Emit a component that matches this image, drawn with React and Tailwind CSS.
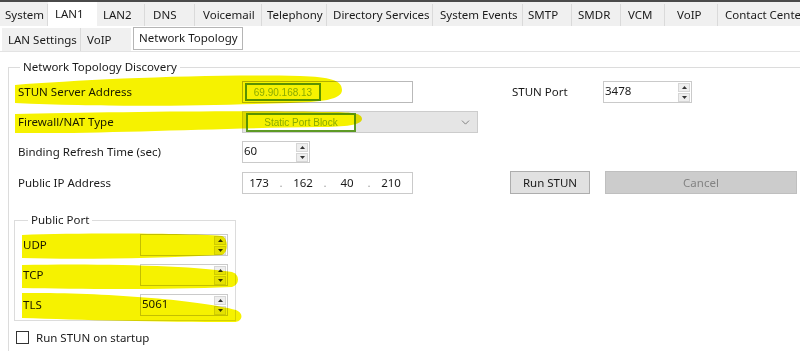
import React from 'react';
import { ChevronDown } from 'lucide-react';

const topTabs = [
  { label: 'System', w: 'w-[46px]', pl: 'pl-[3px]' },
  { label: 'LAN1', w: 'w-[49px]', pl: 'pl-[7px]', active: true },
  { label: 'LAN2', w: 'w-[48px]', pl: 'pl-[6px]' },
  { label: 'DNS', w: 'w-[50px]', pl: 'pl-[8px]' },
  { label: 'Voicemail', w: 'w-[67px]', pl: 'pl-[8px]' },
  { label: 'Telephony', w: 'w-[65px]', pl: 'pl-[5px]' },
  { label: 'Directory Services', w: 'w-[106px]', pl: 'pl-[6px]' },
  { label: 'System Events', w: 'w-[90px]', pl: 'pl-[7px]' },
  { label: 'SMTP', w: 'w-[49px]', pl: 'pl-[5px]' },
  { label: 'SMDR', w: 'w-[49px]', pl: 'pl-[6px]' },
  { label: 'VCM', w: 'w-[44px]', pl: 'pl-[7px]' },
  { label: 'VoIP', w: 'w-[53px]', pl: 'pl-[12px]' },
  { label: 'Contact Center', w: 'w-[100px]', pl: 'pl-[7px]' },
];

const Arrow = ({ up }) => (
  <div className="flex h-[9px] w-[12px] items-center justify-center border border-[#d6d6d6] bg-[#eeeeee]">
    <svg width="5" height="3" viewBox="0 0 5 3">
      {up ? <path d="M0 3 L2.5 0 L5 3 Z" fill="#333" /> : <path d="M0 0 L2.5 3 L5 0 Z" fill="#333" />}
    </svg>
  </div>
);

const Spin = ({ width, value }) => (
  <div className={`flex h-[22px] items-center border border-[#cacaca] bg-white ${width}`}>
    <span className="flex-1 self-start pt-[1px] pl-[1px] leading-[16px]">{value}</span>
    <div className="mr-[1px] flex flex-col gap-[1px]">
      <Arrow up />
      <Arrow />
    </div>
  </div>
);

const Row = ({ label, children }) => (
  <div className="flex h-[22px] items-center">
    <div className="w-[224px] shrink-0">{label}</div>
    {children}
  </div>
);

const PortRow = ({ label, value }) => (
  <div className="flex h-[22px] items-center">
    <div className="w-[117px] shrink-0">{label}</div>
    <Spin width="w-[88px]" value={value} />
  </div>
);

export default function App() {
  return (
    <div className="relative h-[351px] w-[800px] overflow-hidden bg-white font-['Noto_Sans',sans-serif] text-[11.5px] text-[#1a1a1a]">
      {/* top tab strip */}
      <div className="flex h-[26px] items-end border-t-2 border-[#4a4a4a] bg-[#f0f0f0] pl-[2px]">
        {topTabs.map((t) =>
          t.active ? (
            <div key={t.label} className={`flex h-[24px] shrink-0 items-start whitespace-nowrap bg-white pt-[3px] ${t.w} ${t.pl}`}>
              {t.label}
            </div>
          ) : (
            <div key={t.label} className={`flex h-[22px] shrink-0 items-center overflow-hidden whitespace-nowrap border-r border-[#dadada] bg-[#f0f0f0] ${t.w} ${t.pl}`}>
              {t.label}
            </div>
          )
        )}
      </div>

      {/* sub tab strip */}
      <div className="flex h-[26px] items-end border-b border-[#e3e3e3] pl-[2px]">
        <div className="flex h-[23px] w-[79px] items-center border-r border-[#dadada] bg-[#f0f0f0] pl-[6px]">LAN Settings</div>
        <div className="flex h-[23px] w-[50px] items-center bg-[#f0f0f0] pl-[6px]">VoIP</div>
        <div className="mb-[1px] ml-[2px] flex h-[23px] w-[110px] items-start border border-[#b5b5b5] bg-white pl-[5px] pt-[1px]">Network Topology</div>
      </div>

      {/* main group box */}
      <fieldset className="ml-[8px] mt-[7px] h-[320px] border-l border-t border-[#dcdcdc] pl-[5px]">
        <legend className="ml-[6px] px-[3px] leading-[16px]">Network Topology Discovery</legend>

        <div className="flex flex-col gap-[8px] pl-[4px] pt-[6px]">
          <Row label="STUN Server Address">
            <div className="flex h-[22px] w-[171px] items-center border border-[#b9b9b9] bg-white pl-[2px]">
              <div className="flex h-[18px] w-[76px] items-center justify-center border-2 border-[#5d9a25] font-['Liberation_Sans',Arial,sans-serif] text-[10px] text-[#8fb52c]">
                69.90.168.13
              </div>
            </div>
            <div className="ml-[99px] w-[91px]">STUN Port</div>
            <Spin width="w-[89px]" value="3478" />
          </Row>

          <Row label="Firewall/NAT Type">
            <div className="flex h-[22px] w-[236px] items-center border border-[#cccccc] bg-[#e5e5e5] pl-[3px] pr-[5px]">
              <div className="flex h-[19px] w-[110px] items-center justify-center border-2 border-[#5d9a25] bg-white font-['Liberation_Sans',Arial,sans-serif] text-[10px] text-[#8fb52c]">
                Static Port Block
              </div>
              <div className="flex-1" />
              <ChevronDown size={13} strokeWidth={1.5} className="text-[#6b6b6b]" />
            </div>
          </Row>

          <Row label="Binding Refresh Time (sec)">
            <Spin width="w-[68px]" value="60" />
          </Row>

          <div className="flex h-[23px] items-center">
            <div className="w-[224px] shrink-0">Public IP Address</div>
            <div className="flex h-[22px] w-[171px] items-center border border-[#cacaca] bg-white">
              <span className="w-[32px] text-center">173</span>
              <span className="w-[12px] text-center text-[#a0a0a0]">.</span>
              <span className="w-[32px] text-center">162</span>
              <span className="w-[12px] text-center text-[#a0a0a0]">.</span>
              <span className="w-[32px] text-center">40</span>
              <span className="w-[12px] text-center text-[#a0a0a0]">.</span>
              <span className="w-[32px] text-center">210</span>
            </div>
            <button className="ml-[97px] h-[23px] w-[80px] border border-[#adadad] bg-[#e1e1e1]">Run STUN</button>
            <button className="ml-[15px] h-[23px] w-[192px] border border-[#bfbfbf] bg-[#cccccc] text-[#838383]">Cancel</button>
          </div>
        </div>

        {/* public port group */}
        <fieldset className="mt-[18px] h-[109px] w-[222px] border border-[#dcdcdc] pl-[8px]">
          <legend className="ml-[5px] px-[3px] leading-[16px]">Public Port</legend>
          <div className="flex flex-col gap-[8px] pt-[6px]">
            <PortRow label="UDP" value="" />
            <PortRow label="TCP" value="" />
            <PortRow label="TLS" value="5061" />
          </div>
        </fieldset>

        <div className="mt-[8px] flex items-center gap-[7px] pl-[2px]">
          <div className="h-[13px] w-[13px] border border-[#333333] bg-white" />
          <span>Run STUN on startup</span>
        </div>
      </fieldset>

      {/* highlighter marks drawn over the screenshot */}
      <svg className="pointer-events-none absolute left-0 top-0 mix-blend-multiply" width="800" height="351" viewBox="0 0 800 351">
        <g fill="#f6f200">
          <path d="M15,85 C80,80 200,74 300,76 C330,77 342,80 342,90 C342,100 320,102 290,103 C220,105 120,108 15,103 Z" />
          <path d="M15,114 C100,112 250,110 330,112 C355,112 362,114 362,119 C362,125 345,127 320,127 C220,128 100,134 15,133 Z" />
          <path d="M22,235 C80,233 180,233 222,236 C228,238 229,252 222,255 C160,258 80,260 22,258 Z" />
          <path d="M22,265 C100,263 200,266 232,272 C240,274 240,285 232,287 C160,290 80,289 22,288 Z" />
          <path d="M22,293 C100,292 200,300 236,310 C244,313 243,322 234,322 C160,322 80,320 22,318 Z" />
        </g>
      </svg>
    </div>
  );
}
